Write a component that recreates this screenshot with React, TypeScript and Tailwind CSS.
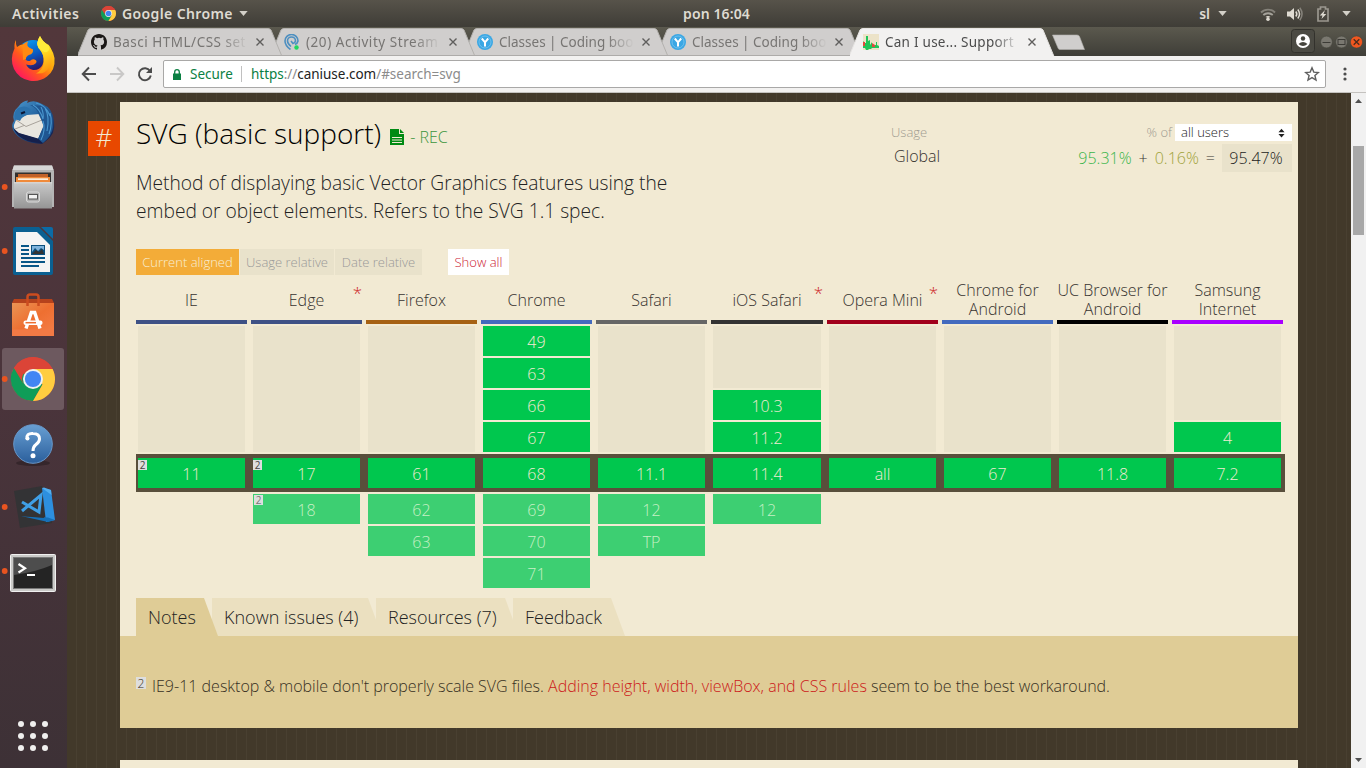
import type { ReactNode } from 'react';

/* ---------- shared drawings ---------- */

function ChromeLogo({ className }: { className: string }) {
  return (
    <svg viewBox="0 0 44 44" className={className}>
      <circle cx="22" cy="22" r="22" fill="#db4437" />
      <path d="M22 22 L2.9 11 A22 22 0 0 0 22 44 L31.5 27.5Z" fill="#0f9d58" />
      <path d="M22 12 H41.6 A22 22 0 0 1 22 44 L31.5 27.5Z" fill="#ffcd40" />
      <path d="M2.9 11 A22 22 0 0 1 41.6 12 H22 A10 10 0 0 0 12.5 27Z" fill="#db4437" />
      <circle cx="22" cy="22" r="10" fill="#f1f1f1" />
      <circle cx="22" cy="22" r="8.1" fill="#4285f4" />
    </svg>
  );
}

function Caret() {
  return (
    <svg viewBox="0 0 10 6" className="h-[5px] w-[9px]">
      <path d="M0 0H10L5 6Z" fill="#d3d0c8" />
    </svg>
  );
}

/* ---------- top bar ---------- */

function TopBar() {
  return (
    <header className="flex h-[27px] shrink-0 items-center bg-gradient-to-b from-[#57534a] to-[#3f3d37] font-['Noto_Sans',sans-serif] text-[14px] font-semibold text-[#dfdbd2]">
      <div className="flex w-[450px] items-center pl-3">
        <span className="w-[68px] whitespace-nowrap text-[14px] tracking-[0.5px]">Activities</span>
        <ChromeLogo className="ml-[21px] h-[15px] w-[15px]" />
        <span className="ml-[6px] w-[117px] whitespace-nowrap text-[14px] tracking-[0.38px]">Google Chrome</span>
        <Caret />
      </div>
      <div className="flex flex-1 justify-center">
        <span className="text-[14px] tracking-[0.1px]">pon 16:04</span>
      </div>
      <div className="flex w-[383px] items-center justify-end pr-[15px]">
        <span className="text-[14px]">sl</span>
        <span className="ml-[8px]"><Caret /></span>
        <svg viewBox="0 0 16 14" className="ml-[33px] h-[14px] w-[16px]" fill="none">
          <path d="M1 5.5a10 10 0 0 1 14 0" stroke="#85827a" strokeWidth="1.9" />
          <path d="M3.3 8a7 7 0 0 1 9.4 0" stroke="#a5a29a" strokeWidth="1.9" />
          <path d="M5.5 10a4 4 0 0 1 5 0L8 11Z" fill="#dfdbd2" />
          <circle cx="8" cy="12.2" r="1.8" fill="#dfdbd2" />
        </svg>
        <svg viewBox="0 0 16 14" className="ml-[11px] h-[14px] w-[16px]" fill="none">
          <path d="M0 4.500h3L7 1v12L3 9.500H0Z" fill="#dfdbd2" />
          <path d="M8.800 4.500q2 2.500 0 5" stroke="#dfdbd2" strokeWidth="1.500" />
          <path d="M10.800 2.500q3.500 4.500 0 9" stroke="#dfdbd2" strokeWidth="1.500" />
          <path d="M12.800 .8q4.500 6.200 0 12.400" stroke="#85827a" strokeWidth="1.500" />
        </svg>
        <svg viewBox="0 0 12 16" className="ml-[14px] h-4 w-3" fill="none">
          <path d="M1 3H3.500V1H8.500V3H11V15H1Z" stroke="#9a978f" strokeWidth="1.700" />
          <path d="M8 4L2.800 9.500H5.500L4.500 13L9.300 8H6.500Z" fill="#dfdbd2" />
        </svg>
        <span className="ml-[13px]"><Caret /></span>
      </div>
    </header>
  );
}

/* ---------- dock ---------- */

function DockItem({ running, active, children }: { running?: boolean; active?: boolean; children: ReactNode }) {
  return (
    <div className="h-16 w-[67px] shrink-0">
      <svg viewBox="0 0 67 64" className="h-16 w-[67px]">
        {active && <rect x="2" y="1" width="62" height="62" rx="3" fill="#6d595f" />}
        {running && <circle cx="4.700" cy="32" r="2.900" fill="#e95420" />}
        {children}
      </svg>
    </div>
  );
}

function Dock() {
  return (
    <nav className="flex w-[67px] shrink-0 flex-col bg-gradient-to-b from-[#52373b] via-[#4a343b] to-[#3d3136]">
      <DockItem>
        <defs>
          <linearGradient id="fox" x1="0.9" y1="0.1" x2="0.15" y2="0.85">
            <stop offset="0" stopColor="#ffd91f" />
            <stop offset=".4" stopColor="#ff9f0a" />
            <stop offset=".65" stopColor="#ff5a1c" />
            <stop offset="1" stopColor="#ff1a5c" />
          </linearGradient>
          <linearGradient id="globe" x1="0.2" y1="0" x2="0.5" y2="1">
            <stop offset="0" stopColor="#0a9cf0" />
            <stop offset=".55" stopColor="#0b57c0" />
            <stop offset="1" stopColor="#2a1a6a" />
          </linearGradient>
          <linearGradient id="flame" x1="0" y1="0" x2="0.2" y2="1">
            <stop offset="0" stopColor="#fff04a" />
            <stop offset=".5" stopColor="#ffdb22" />
            <stop offset="1" stopColor="#ff9a10" />
          </linearGradient>
        </defs>
        <path d="M16 13Q15.500 17 17 20Q20 17.500 24 17L44 15Q53 21 54.500 31Q55.500 43 47 49.500Q40 55 30 53.700Q19 52 14 42Q9.500 32 14.500 21.500Q14 16 16 13Z" fill="url(#fox)" />
        <path d="M22 17Q30 11 39 14Q37.500 20 41.500 25Q45 31 42.500 38Q39.500 43.500 33 43Q28.500 42 26 37.500Q33 39.500 35.500 36.500Q37.500 34.500 35.500 33Q33 31.500 30.500 33.500Q28 35 25.500 32.500Q26 28.500 31 27.200Q33.500 25.500 32.500 22.500Q27 21.500 26.500 17.500Z" fill="url(#globe)" />
        <path d="M22.500 18Q25 15 28 14.500Q26 19.500 30 21L33 22.500Q33 26 28.500 27.500Q25.500 29 26 32L23 33Z" fill="#ff8a12" />
        <path d="M40 9Q35.500 16 38.500 21Q45 28 44 36Q42.500 43 36 46.500Q46 47.500 50 39Q53 31 51 22Q49 17 47.500 17.500Q42 14 40 9Z" fill="url(#flame)" />
        <path d="M40 9Q35.500 16 38.500 21Q44 26 47 25Q51 22 48 18Q42 14 40 9Z" fill="#ffec3a" />
      </DockItem>
      <DockItem>
        <defs>
          <linearGradient id="bird" x1="0" y1="0" x2="0.8" y2="1">
            <stop offset="0" stopColor="#4c9ad0" />
            <stop offset=".5" stopColor="#23629f" />
            <stop offset="1" stopColor="#151c49" />
          </linearGradient>
        </defs>
        <path d="M19 15Q22 10 28 9.500L27 12Q34 8 42 13Q53 17 54 30Q56 43 46 50L42 53Q20 52 13 39Q11 33 14 30Q11 22 19 15Z" fill="url(#bird)" />
        <path d="M16 29L27 24L40 23L44 35L38 48L18 42Q13 38 14 34Z" fill="#e9e6df" />
        <path d="M16 29L26 35.500L42 29M15 38L24 34.500" fill="none" stroke="#a8a29b" />
        <path d="M18 17Q26 13 31 19L28 23.500Q22 25 20 30L15 28Q13 22 18 17Z" fill="#2b72ad" />
        <path d="M21 22.500L25 21" stroke="#0b1634" strokeWidth="2" />
        <path d="M30 14Q37 17 38.500 23Q42 30 43.500 35L38 48L43 52Q52 45 53 36Q54 22 45 15Z" fill="#1f5691" />
        <path d="M33 14Q40 18 43 28Q44 22 41 16M45 17Q50 26 47 40M50 22Q53 32 49 43M43 30Q46 39 41 49M36 12Q46 14 50 25" fill="none" stroke="#4a97cf" strokeWidth="1.100" />
        <path d="M13 37L19 42L38 47.500L42 52Q20 52 13 37Z" fill="#15204c" />
      </DockItem>
      <DockItem running>
        <defs>
          <linearGradient id="drawer" x1="0" y1="0" x2="0" y2="1">
            <stop offset="0" stopColor="#c9c9c9" />
            <stop offset="1" stopColor="#959595" />
          </linearGradient>
        </defs>
        <path d="M14 10.500H52L54 16V52H12V16Z" fill="#b5b5b5" />
        <path d="M14 10.500H52L53.500 15H12.500Z" fill="#d6d6d6" />
        <rect x="15" y="17.500" width="36" height="12" fill="#33302f" />
        <path d="M18 19H48V22H18Z" fill="#c1622a" />
        <path d="M16 22H50V30H16Z" fill="#f08a3a" />
        <path d="M18 23.300H48V25H18Z" fill="#fbeedd" />
        <path d="M14 27.300H52V53.500H14Z" fill="url(#drawer)" />
        <path d="M14 27.800H52" stroke="#dedede" />
        <rect x="26.500" y="37" width="13" height="10" rx="2" fill="#b0b0b0" stroke="#dadada" />
        <rect x="28.500" y="39.500" width="9" height="4.500" fill="#f2f2f2" stroke="#555" />
      </DockItem>
      <DockItem running>
        <path d="M15 8H39L53 22V54Q53 56 51 56H15Q13 56 13 54V10Q13 8 15 8Z" fill="#0a6092" />
        <path d="M41 8H51Q53 8 53 10V20Z" fill="#0b6ba6" />
        <path d="M16 13H37L50 26V53H16Z" fill="#f4f4f4" />
        <path d="M21 27H29M21 31H29M21 35H29M21 39H45M21 43H45M21 47H39" stroke="#085687" strokeWidth="2" />
        <rect x="31" y="26" width="14" height="10" fill="#0b4f7d" />
        <path d="M32 27H44V31L41 29L38 32L35 29L32 33Z" fill="#7fb3dc" />
        <path d="M32 35L36 31L39 33L42 30L44 35Z" fill="#333" />
      </DockItem>
      <DockItem>
        <defs>
          <linearGradient id="bag" x1="0" y1="0" x2="1" y2="1">
            <stop offset="0" stopColor="#ea9454" />
            <stop offset=".5" stopColor="#ee6f31" />
            <stop offset="1" stopColor="#f57f49" />
          </linearGradient>
        </defs>
        <path d="M14 16H52L54 20H12Z" fill="#b6421c" />
        <path d="M12 20H54V53H12Z" fill="url(#bag)" />
        <path d="M12 46.500H54V53H12Z" fill="#f27a45" />
        <path d="M27.500 23V14Q27.500 11.500 30 11.500H36Q38.500 11.500 38.500 14V23" fill="none" stroke="#cc4c1f" strokeWidth="2.500" />
        <path d="M26 45.500L31.300 29.500H34.700L40 45.500" fill="none" stroke="#fff" strokeWidth="3.400" />
        <rect x="23.500" y="37.500" width="19" height="4.500" rx="2" fill="#fff" />
        <path d="M25.500 39.700H36" stroke="#ee6f31" strokeWidth="1.500" />
      </DockItem>
      <DockItem running active>
        <circle cx="33" cy="32" r="22" fill="#db4437" />
        <path d="M33 32L13.900 21A22 22 0 0 0 33 54L42.500 37.500Z" fill="#0f9d58" />
        <path d="M33 22H52.600A22 22 0 0 1 33 54L42.500 37.500Z" fill="#ffcd40" />
        <path d="M13.900 21A22 22 0 0 1 52.600 22H33A10 10 0 0 0 23.500 37Z" fill="#db4437" />
        <circle cx="33" cy="32" r="10" fill="#f1f1f1" />
        <circle cx="33" cy="32" r="8.100" fill="#4285f4" />
      </DockItem>
      <DockItem>
        <defs>
          <linearGradient id="help" x1="0" y1="0" x2="0" y2="1">
            <stop offset="0" stopColor="#689fd3" />
            <stop offset="1" stopColor="#2b5f9c" />
          </linearGradient>
        </defs>
        <ellipse cx="33" cy="52" rx="17" ry="3" fill="#35262b" />
        <circle cx="33" cy="33" r="19.300" fill="url(#help)" stroke="#6797c9" />
        <path d="M27 28Q26 22 33 22.500Q39.500 22.500 39.500 28Q39.500 31 35.500 34Q33 36 33 40" fill="none" stroke="#fff" strokeWidth="3" />
        <circle cx="27.500" cy="27.500" r="2" fill="#fff" />
        <circle cx="33" cy="44.800" r="2.500" fill="#fff" />
      </DockItem>
      <DockItem running>
        <path d="M14 16L42 11L52 48L20 53Z" fill="#333335" />
        <path d="M42 13L51 15L55 45L46 47Z" fill="#2d8fdf" />
        <path d="M42 13L44 12.500L51 15L51.500 20Z" fill="#51aef0" />
        <path d="M21 41L48 42.500L55 45L48 47Z" fill="#1670b8" />
        <path d="M21 41L44 43L42 30Z" fill="#333335" />
        <path d="M22 27L39 37L41 20L22 36" fill="none" stroke="#3f9fe6" strokeWidth="3" />
      </DockItem>
      <DockItem running>
        <rect x="10.500" y="15.500" width="45" height="37" rx="1" fill="#c9c9c7" stroke="#f0f0f0" />
        <rect x="13.500" y="18.500" width="39" height="31" fill="#242424" stroke="#777" />
        <path d="M14 19H52V26Q36 33 14 36Z" fill="#4d4d4d" />
        <path d="M18.500 25L25 29.300L18.500 33.500" fill="none" stroke="#fff" strokeWidth="2.200" />
        <path d="M27 36H35" stroke="#fff" strokeWidth="2" />
      </DockItem>
      <svg viewBox="0 0 67 64" className="mt-auto h-16 w-[67px]" fill="#f0efee">
        {[20, 32, 44].map((y) => [21, 33, 45].map((x) => <circle key={`${x}-${y}`} cx={x} cy={y} r="3" />))}
      </svg>
    </nav>
  );
}

/* ---------- browser frame ---------- */

const bootIcon = (
  <svg viewBox="0 0 16 16" className="h-4 w-4">
    <circle cx="8" cy="8" r="8" fill="#3aa7e4" />
    <circle cx="8" cy="8" r="6" fill="none" stroke="#7cc5ee" strokeWidth=".8" />
    <path d="M4.800 4.500L8 8.300L11.200 4.500M8 8V12.500" stroke="#fff" strokeWidth="2" fill="none" />
  </svg>
);

const tabs: { title: string; icon: ReactNode; stack: string; tracking: string }[] = [
  {
    title: 'Basci HTML/CSS set',
    stack: 'z-40',
    tracking: 'tracking-[0.5px]',
    icon: (
      <svg viewBox="0 0 16 16" className="h-4 w-4" fill="#1b1817">
        <path d="M8 0C3.580 0 0 3.580 0 8c0 3.540 2.290 6.530 5.470 7.590.4.070.55-.17.55-.38 0-.19-.01-.82-.01-1.490-2.010.37-2.530-.49-2.690-.94-.09-.23-.48-.94-.82-1.130-.28-.15-.68-.52-.01-.53.63-.01 1.080.58 1.230.82.72 1.210 1.870.87 2.330.66.07-.52.28-.87.51-1.070-1.780-.2-3.640-.89-3.640-3.950 0-.87.31-1.590.82-2.150-.08-.2-.36-1.020.08-2.120 0 0 .67-.21 2.200.82a7.600 7.600 0 0 1 4 0c1.530-1.040 2.200-.82 2.200-.82.44 1.100.16 1.920.08 2.120.51.56.82 1.270.82 2.150 0 3.070-1.870 3.750-3.650 3.950.29.25.54.73.54 1.480 0 1.070-.01 1.930-.01 2.200 0 .21.15.46.55.38A8 8 0 0 0 16 8c0-4.420-3.580-8-8-8z" />
      </svg>
    ),
  },
  {
    title: '(20) Activity Stream',
    stack: 'z-30',
    tracking: 'tracking-[0.55px]',
    icon: (
      <svg viewBox="0 0 16 16" className="h-4 w-4" fill="none">
        <path d="M6.500 15.500Q1 11.500 1 7A6.500 6.500 0 0 1 14 7Q13.500 9.500 11 10.500M7 12.500Q3.500 9.500 3.500 7A4 4 0 0 1 11.500 7Q11 9 9 9.500L7 7" stroke="#4d8fc0" strokeWidth="1.600" />
        <circle cx="12.500" cy="13.500" r="2.200" fill="#1ed760" />
      </svg>
    ),
  },
  { title: 'Classes | Coding boo', stack: 'z-20', tracking: 'tracking-normal', icon: bootIcon },
  { title: 'Classes | Coding boo', stack: 'z-10', tracking: 'tracking-normal', icon: bootIcon },
  {
    title: 'Can I use... Support',
    stack: 'z-50',
    tracking: 'tracking-[0.25px]',
    icon: (
      <svg viewBox="0 0 16 16" className="h-4 w-4">
        <rect width="16" height="16" fill="#ece3c8" />
        <path d="M0 14V7L2 9H3V2H5V7L7 6V11L9 8V11H13V8H14V11L16 12V14H9L8 15H6L5 16H3L2 14Z" fill="#1fc558" />
        <path d="M0 8H2V12H0ZM9 9L12 11V13H9Z" fill="#e2483c" />
      </svg>
    ),
  },
];

function TabStrip() {
  return (
    <div className="flex h-[29px] shrink-0 items-start bg-gradient-to-b from-[#5b594e] to-[#3f3e38] pl-[11px] pt-px">
      {tabs.map((tab, i) => {
        const active = i === tabs.length - 1;
        return (
          <div key={i} className={`relative flex h-7 w-[193px] shrink-0 items-center pl-[13px] ${tab.stack}`}>
            <svg viewBox="0 0 206 28" className="absolute left-0 top-0 h-7 w-[206px]">
              <path
                d="M-1 28.500L10 2Q11 .5 13 .5H190Q192 .5 193 2L204 28.500Z"
                fill={active ? '#f2f1f0' : '#d0cecd'}
                stroke={active ? '#e6e4e2' : '#b3b1ae'}
              />
              {!active && <path d="M0 27.500H204" stroke="#adaba9" />}
            </svg>
            <span className="relative">{tab.icon}</span>
            <span
              className={`relative ml-[6px] w-[136px] shrink-0 whitespace-nowrap font-['Noto_Sans',sans-serif] text-[13.5px] [mask-image:linear-gradient(to_right,black_108px,transparent_135px)] ${tab.tracking} ${active ? 'text-[#4c4c4c]' : 'text-[#777573]'}`}
            >
              {tab.title}
            </span>
            <svg viewBox="0 0 8 8" className="relative ml-[7px] h-2 w-2 shrink-0" stroke="#5f5e5c" strokeWidth="1.400">
              <path d="M.5 .5L7.500 7.500M7.500 .5L.5 7.500" />
            </svg>
          </div>
        );
      })}
      <svg viewBox="0 0 34 17" className="ml-[9px] mt-[6px] h-[17px] w-[34px]">
        <path d="M.5 1H25Q27 1 27.500 2.500L32.500 15.500H8Q6.500 15.500 6 14Z" fill="#d0cecd" stroke="#b3b1ae" strokeWidth=".6" />
      </svg>
      <svg viewBox="0 0 76 26" className="ml-auto h-[26px] w-[76px]">
        <rect x="1.500" y="1.500" width="23" height="23" rx="3" fill="#4b4a43" stroke="#33322d" />
        <circle cx="13" cy="13" r="7" fill="#fff" />
        <circle cx="13" cy="10.500" r="2.200" fill="#45443d" />
        <path d="M8.500 16Q13 12 17.500 16Q13 20 8.500 16Z" fill="#45443d" />
        <circle cx="36.500" cy="14" r="5.900" fill="#7a7870" stroke="#45443d" strokeWidth=".6" />
        <path d="M32.500 14.500H40.500" stroke="#3c3b36" />
        <circle cx="51.500" cy="14" r="5.900" fill="#7a7870" stroke="#45443d" strokeWidth=".6" />
        <rect x="48" y="11.500" width="7" height="5" fill="none" stroke="#3c3b36" />
        <circle cx="66.500" cy="14" r="6.100" fill="#f0571f" stroke="#45443d" strokeWidth=".6" />
        <path d="M63.700 11.200L69.300 16.800M69.300 11.200L63.700 16.800" stroke="#4b2b1c" strokeWidth="1.300" />
      </svg>
    </div>
  );
}

function Toolbar() {
  return (
    <div className="flex h-[37px] shrink-0 items-center border-b border-[#c4c2bf] bg-[#f2f1f0] pl-[14px]">
      <svg viewBox="0 0 72 16" className="h-4 w-[72px]" fill="none" strokeWidth="1.900">
        <path d="M15 8H2M8 1.500L1.700 8L8 14.500" stroke="#4c4c4c" />
        <path d="M29 8H42M36 1.500L42.300 8L36 14.500" stroke="#c9c8c7" />
        <path d="M69 5A6 6 0 1 0 69.800 9.500" stroke="#4c4c4c" />
        <path d="M71 1V7H65Z" fill="#4c4c4c" />
      </svg>
      <div className="ml-[10px] flex h-7 w-[1163px] items-center rounded-[2px] border border-[#a9a8a7] bg-white pl-[9px] font-['Noto_Sans',sans-serif] text-[13.5px] text-[#8b8b8b]">
        <svg viewBox="0 0 8 11" className="h-[11px] w-2">
          <path d="M0 4.500H8V11H0Z" fill="#0b8043" />
          <path d="M1.700 5V3a2.300 2.300 0 0 1 4.600 0V5" fill="none" stroke="#0b8043" strokeWidth="1.300" />
        </svg>
        <span className="ml-[9px] w-[51px] text-[#0b8043]">Secure</span>
        <span className="h-4 w-px bg-[#c0c0c0]" />
        <span className="ml-[9px] flex-1 tracking-[-0.03px]">
          <span className="text-[#0b8043]">https</span>://<span className="text-[#222]">caniuse.com</span>/#search=svg
        </span>
        <svg viewBox="0 0 16 16" className="mr-[5px] h-4 w-4">
          <path d="M8 1.800L9.800 6.100L14.400 6.500L10.900 9.500L12 14L8 11.600L4 14L5.100 9.500L1.600 6.500L6.200 6.100Z" fill="none" stroke="#5f5f5f" strokeWidth="1.400" />
        </svg>
      </div>
      <svg viewBox="0 0 4 14" className="ml-[17px] h-[14px] w-1" fill="#4c4c4c">
        <circle cx="2" cy="2" r="1.600" />
        <circle cx="2" cy="7" r="1.600" />
        <circle cx="2" cy="12" r="1.600" />
      </svg>
    </div>
  );
}

/* ---------- support table ---------- */

type Browser = {
  name: string;
  bar: string;
  width: string;
  cell: string;
  past: string[];
  current: string;
  future: string[];
  star?: boolean;
  noteCurrent?: boolean;
  noteFuture?: boolean;
};

const W = 'w-[111px]';
const C = 'w-[107px]';

const browsers: Browser[] = [
  { name: 'IE', bar: 'border-[#3e5185]', width: W, cell: C, past: [], current: '11', future: [], noteCurrent: true },
  { name: 'Edge', bar: 'border-[#3e5185]', width: W, cell: C, past: [], current: '17', future: ['18'], star: true, noteCurrent: true, noteFuture: true },
  { name: 'Firefox', bar: 'border-[#a66113]', width: W, cell: C, past: [], current: '61', future: ['62', '63'] },
  { name: 'Chrome', bar: 'border-[#436abe]', width: W, cell: C, past: ['49', '63', '66', '67'], current: '68', future: ['69', '70', '71'] },
  { name: 'Safari', bar: 'border-[#666666]', width: W, cell: C, past: [], current: '11.1', future: ['12', 'TP'] },
  { name: 'iOS Safari', bar: 'border-[#333333]', width: 'w-[112px]', cell: 'w-[108px]', past: ['10.3', '11.2'], current: '11.4', future: ['12'], star: true },
  { name: 'Opera Mini', bar: 'border-[#a1001b]', width: W, cell: C, past: [], current: 'all', future: [], star: true },
  { name: 'Chrome for Android', bar: 'border-[#436abe]', width: W, cell: C, past: [], current: '67', future: [] },
  { name: 'UC Browser for Android', bar: 'border-black', width: W, cell: C, past: [], current: '11.8', future: [] },
  { name: 'Samsung Internet', bar: 'border-[#a900ff]', width: W, cell: C, past: ['4'], current: '7.2', future: [] },
];

function Cell({ text, tone, note }: { text: string; tone: string; note?: string }) {
  return (
    <div className={`relative h-[30px] text-center text-[16px] leading-[33px] ${tone}`}>
      {text}
      {note && (
        <span className={`absolute h-[10px] w-[9px] bg-[#dedede] text-[10px] leading-[10px] ${note}`}>2</span>
      )}
    </div>
  );
}

function SupportTable() {
  return (
    <div className="w-[1149px]">
      <div className="flex h-[49px] gap-1">
        {browsers.map((b) => (
          <div key={b.name} className={`relative flex shrink-0 items-center justify-center border-b-4 pt-[5px] text-center text-[16px] leading-[19px] text-[#373330] ${b.width} ${b.bar}`}>
            {b.name}
            {b.star && <span className="absolute right-0 top-[8px] text-[17px] leading-[20px] text-[#cc2222]">*</span>}
          </div>
        ))}
      </div>
      <div className="mb-0.5 mt-0.5 flex h-[126px] gap-2 pl-0.5">
        {browsers.map((b) => (
          <div key={b.name} className={`flex shrink-0 flex-col gap-0.5 ${b.cell}`}>
            {b.past.length < 4 && <div className="flex-1 bg-[#e9e2cb]" />}
            {b.past.map((v) => (
              <Cell key={v} text={v} tone="bg-[#00c74e] text-[#f2ead3]" />
            ))}
          </div>
        ))}
      </div>
      <div className="flex h-[38px] gap-2 bg-[#594f3b] py-1 pl-0.5">
        {browsers.map((b) => (
          <div key={b.name} className={`shrink-0 ${b.cell}`}>
            <Cell text={b.current} tone="bg-[#00c74e] text-[#f2ead3]" note={b.noteCurrent ? 'left-0 top-0.5 font-normal text-[#444]' : undefined} />
          </div>
        ))}
      </div>
      <div className="mt-0.5 flex h-[94px] gap-2 pl-0.5">
        {browsers.map((b) => (
          <div key={b.name} className={`flex shrink-0 flex-col gap-0.5 ${b.cell}`}>
            {b.future.map((v) => (
              <Cell key={v} text={v} tone="bg-[#3dcf72] text-[#c8efc5]" note={b.noteFuture ? 'left-px top-px font-normal text-[#777]' : undefined} />
            ))}
          </div>
        ))}
      </div>
    </div>
  );
}

/* ---------- feature card ---------- */

const tabShape = '[clip-path:polygon(0_0,calc(100%-14px)_0,100%_100%,0_100%)]';

function FeatureCard() {
  return (
    <article className="relative flex h-[626px] w-[1178px] flex-col bg-[#f2ead3]">
      <a className="absolute -left-8 top-[19px] h-[35px] w-8 bg-[#e84800] text-center text-[26px] leading-[32px] text-[#f2ead3]">#</a>
      <div className="flex h-[147px] pl-4">
        <div className="w-[755px] shrink-0">
          <div className="flex h-[62px] items-center">
            <h1 className="text-[28px] leading-[40px] text-black">SVG (basic support)</h1>
            <svg viewBox="0 0 14 16" className="ml-[9px] mt-[7px] h-4 w-[14px]">
              <path d="M0 0H9V5H14V16H0ZM10 0L14 4H10Z" fill="#008a13" />
              <path d="M2 8.500H12M2 11H12M2 13.500H12" stroke="#f2ead3" />
            </svg>
            <span className="ml-[6px] mt-[8px] text-[16px] text-[#3b953d]">- REC</span>
          </div>
          <p className="mt-[5px] w-[560px] text-[19.2px] leading-[28px] text-[#222]">
            Method of displaying basic Vector Graphics features using the embed or object elements. Refers to the SVG 1.1 spec.
          </p>
        </div>
        <div className="w-[401px] shrink-0 pt-[21px]">
          <div className="flex h-[19px] items-center text-[13px] text-[#9f9b90]">
            <span>Usage</span>
            <span className="ml-auto">% of</span>
            <span className="ml-[3px] flex h-[17px] w-[117px] items-center bg-white pl-[6px] text-[#222]">
              all users
              <svg viewBox="0 0 8 10" className="ml-auto mr-[7px] h-[10px] w-[7px]" fill="#222">
                <path d="M4 0L7.500 4H.5ZM4 10L7.500 6H.5Z" />
              </svg>
            </span>
          </div>
          <div className="mt-[2px] flex h-[28px] items-center text-[16px] text-[#373330]">
            <span className="mb-1 ml-[3px]">Global</span>
            <span className="ml-auto text-[#39b54a]">95.31%</span>
            <span className="ml-[7px]">+</span>
            <span className="ml-[7px] text-[#a0a23a]">0.16%</span>
            <span className="ml-[7px]">=</span>
            <span className="ml-[7px] h-full w-[70px] bg-[#e9e2cb] pr-[2px] text-center leading-[29px] text-[#222]">95.47%</span>
          </div>
        </div>
      </div>
      <div className="flex h-[26px] gap-px pl-4 text-center text-[13px] leading-[27px] text-[#999]">
        <span className="w-[103px] bg-[#f3ac38] text-[#f7eed6]">Current aligned</span>
        <span className="w-[94px] bg-[#e9e2cb]">Usage relative</span>
        <span className="w-[87px] bg-[#e9e2cb]">Date relative</span>
        <span className="ml-[25px] w-[61px] bg-white text-[#cc2233]">Show all</span>
      </div>
      <div className="pl-4">
        <SupportTable />
      </div>
      <div className="mt-[10px] flex h-[38px] pl-4 text-[18px] leading-[39px] text-[#222]">
        <span className={`relative z-10 w-[82px] bg-[#dfcc96] pl-3 ${tabShape}`}>Notes</span>
        <span className={`-ml-[6px] w-[170px] bg-[#ebe0c0] pl-3 ${tabShape}`}>Known issues (4)</span>
        <span className={`-ml-[6px] w-[143px] bg-[#ebe0c0] pl-3 ${tabShape}`}>Resources (7)</span>
        <span className={`-ml-[6px] w-[112px] bg-[#ebe0c0] pl-3 ${tabShape}`}>Feedback</span>
      </div>
      <div className="flex flex-1 bg-[#dfcc96] pl-4 pt-[36px] text-[16px] leading-[28px] text-[#373023]">
        <span className="mt-[5px] h-[12px] w-[10px] bg-[#dedede] text-center text-[12px] leading-[13px]">2</span>
        <p className="ml-[6px]">
          IE9-11 desktop &amp; mobile don't properly scale SVG files. <a className="text-[#cc1a1a]">Adding height, width, viewBox, and CSS rules</a> seem to be the best workaround.
        </p>
      </div>
    </article>
  );
}

function Scrollbar() {
  return (
    <div className="flex w-[15px] shrink-0 flex-col items-center bg-[#f1f1f1]">
      <svg viewBox="0 0 7 4" className="mt-[6px] h-1 w-[7px]" fill="#505050"><path d="M3.500 0L7 4H0Z" /></svg>
      <div className="mt-[43px] h-[89px] w-[11px] bg-[#a8a8a8]" />
      <svg viewBox="0 0 7 4" className="mb-[6px] mt-auto h-1 w-[7px]" fill="#505050"><path d="M0 0H7L3.500 4Z" /></svg>
    </div>
  );
}

export default function App() {
  return (
    <div className="flex h-[768px] w-[1366px] flex-col overflow-hidden">
      <TopBar />
      <div className="flex min-h-0 flex-1">
        <Dock />
        <main className="flex min-w-0 flex-1 flex-col">
          <TabStrip />
          <Toolbar />
          <div className="flex min-h-0 flex-1">
            <div className="flex-1 overflow-hidden bg-[#42392a] bg-[repeating-linear-gradient(to_right,#42392a_0px,#42392a_9px,#494031_9px,#494031_10px)] pl-[53px] pt-[9px] font-['Open_Sans',sans-serif] font-light">
              <FeatureCard />
              <div className="mt-8 h-20 w-[1178px] bg-[#f2ead3]" />
            </div>
            <Scrollbar />
          </div>
        </main>
      </div>
    </div>
  );
}
